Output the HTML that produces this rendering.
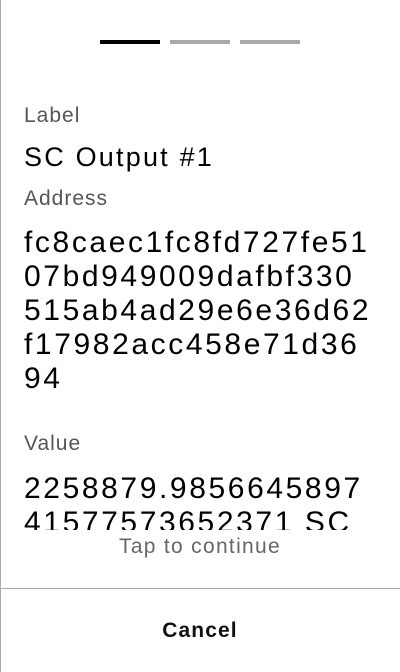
<html><head><style>
body{margin:0;width:400px;height:672px;background:#fff;font-family:"Liberation Sans",sans-serif;position:relative;overflow:hidden}
.lb{position:absolute;left:0;top:0;width:1px;height:672px;background:#aaa}
.bar{position:absolute;top:40px;height:4px;width:60px;background:#aaa}
.t{position:absolute;left:24px;white-space:nowrap}
.g{color:#555;font-size:21px;letter-spacing:1px}
.big{font-size:30px;letter-spacing:2.6px;line-height:34px;color:#000}
</style></head><body>
<div class="lb"></div>
<div class="bar" style="left:100px;background:#000"></div>
<div class="bar" style="left:170px"></div>
<div class="bar" style="left:240px"></div>
<div class="t g" style="top:104px">Label</div>
<div class="t" style="top:142px;font-size:27px;letter-spacing:2.2px;color:#000">SC Output #1</div>
<div class="t g" style="top:187px">Address</div>
<div class="t big" style="top:226px">fc8caec1fc8fd727fe51<br>07bd949009dafbf330<br>515ab4ad29e6e36d62<br>f17982acc458e71d36<br>94</div>
<div class="t g" style="top:432px">Value</div>
<div style="position:absolute;left:0;top:460px;width:400px;height:70px;overflow:hidden">
<div class="t big" style="top:12px">2258879.9856645897<br>41577573652371 SC</div></div>
<div style="position:absolute;top:535px;width:400px;text-align:center;font-size:21px;letter-spacing:1.3px;color:#666">Tap to continue</div>
<div style="position:absolute;top:588px;left:0;width:400px;height:1px;background:#aaa"></div>
<div style="position:absolute;top:619px;width:400px;text-align:center;font-size:21px;letter-spacing:1.1px;font-weight:bold;color:#111">Cancel</div>
</body></html>
